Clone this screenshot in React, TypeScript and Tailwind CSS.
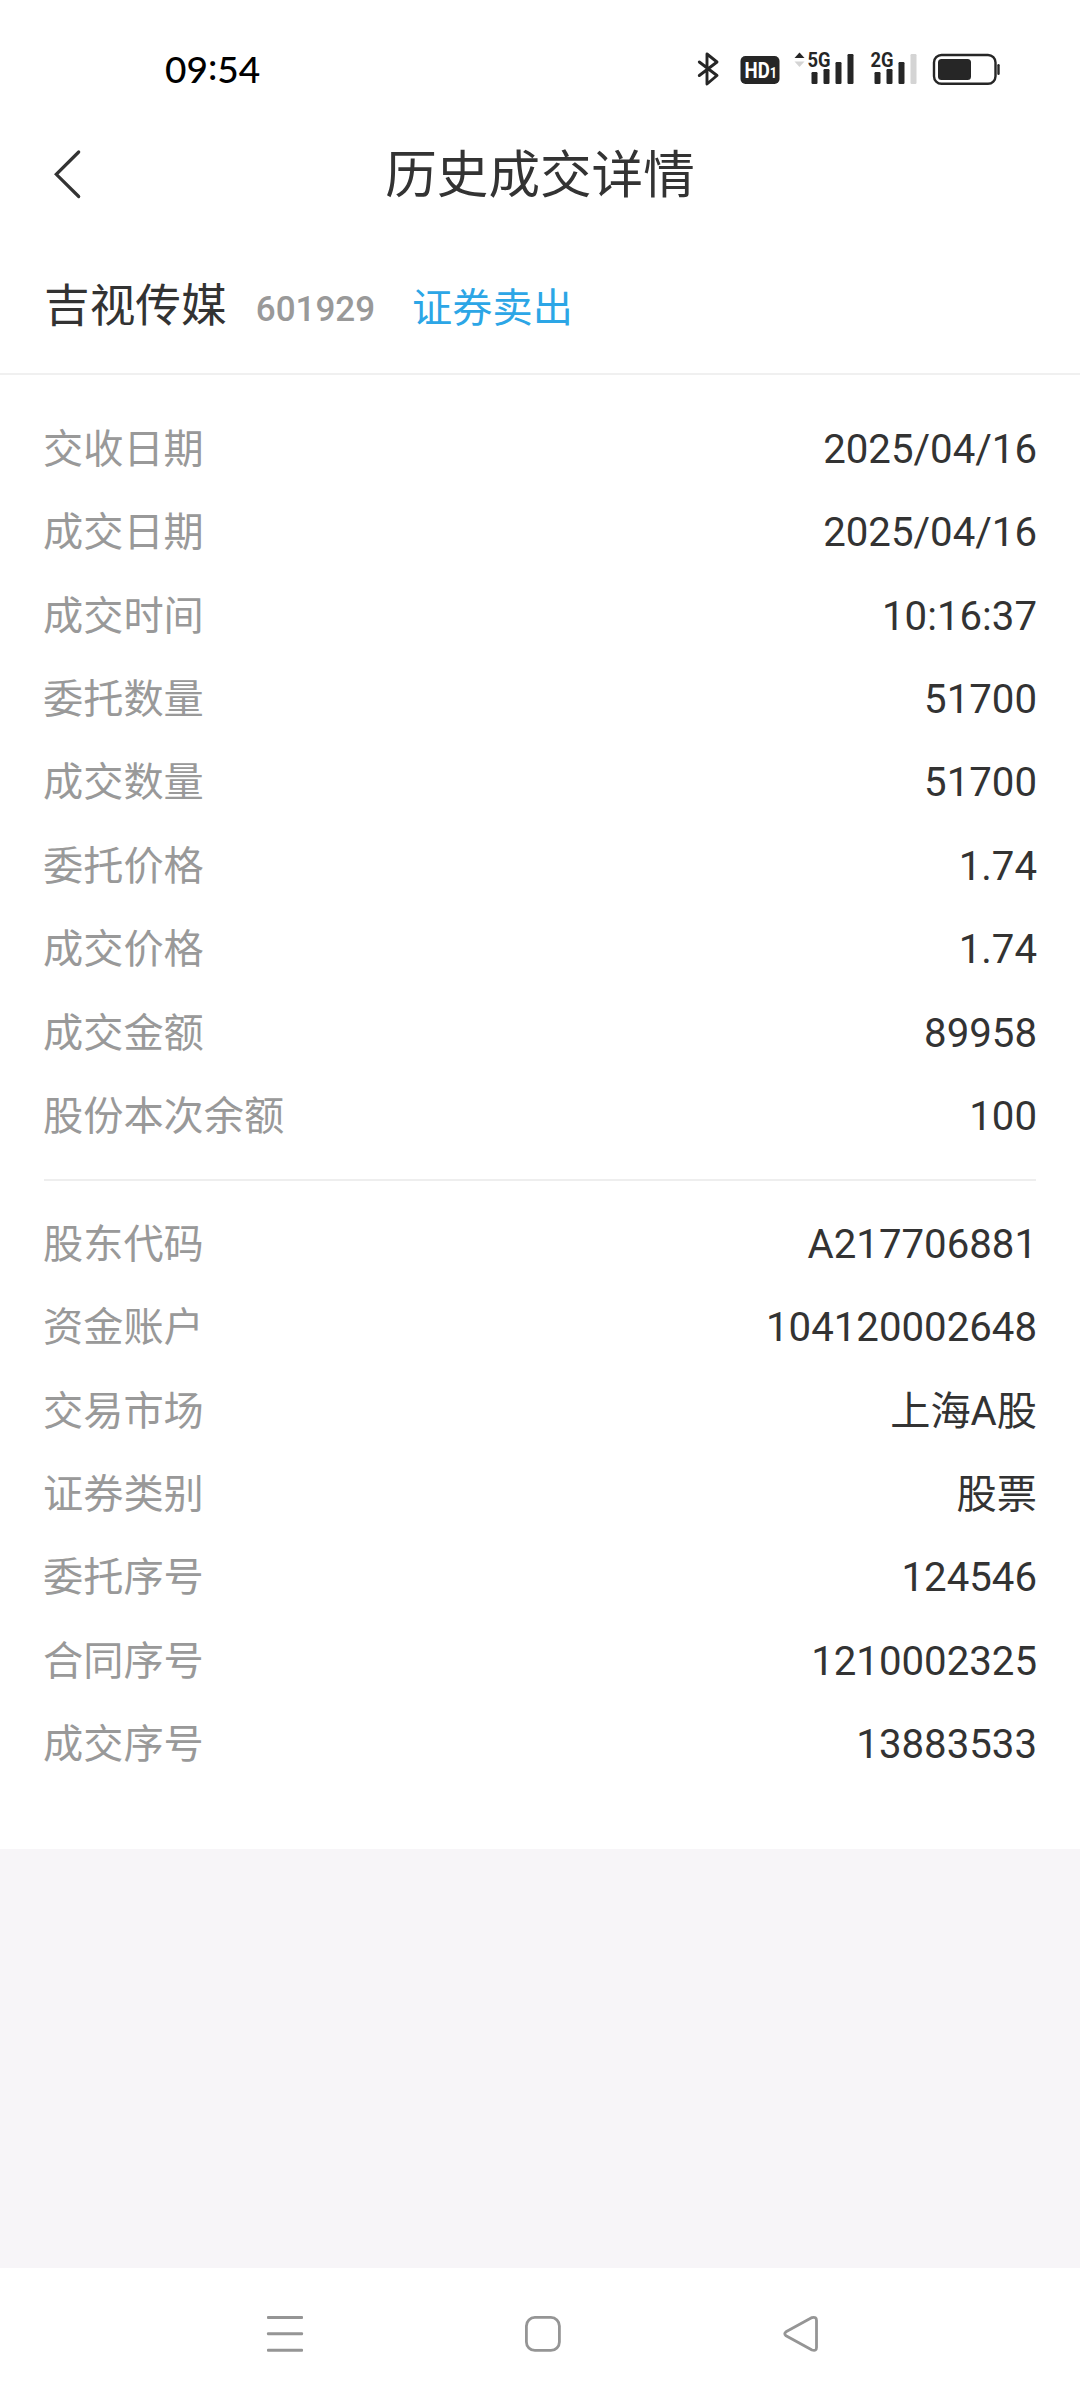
import React from 'react';

type Field = { label: string; value: string };

const tradeFields: Field[] = [
  { label: '交收日期', value: '2025/04/16' },
  { label: '成交日期', value: '2025/04/16' },
  { label: '成交时间', value: '10:16:37' },
  { label: '委托数量', value: '51700' },
  { label: '成交数量', value: '51700' },
  { label: '委托价格', value: '1.74' },
  { label: '成交价格', value: '1.74' },
  { label: '成交金额', value: '89958' },
  { label: '股份本次余额', value: '100' },
];

const accountFields: Field[] = [
  { label: '股东代码', value: 'A217706881' },
  { label: '资金账户', value: '104120002648' },
  { label: '交易市场', value: '上海A股' },
  { label: '证券类别', value: '股票' },
  { label: '委托序号', value: '124546' },
  { label: '合同序号', value: '1210002325' },
  { label: '成交序号', value: '13883533' },
];

const StatusIcons: React.FC = () => (
  <svg width="340" height="80" viewBox="0 0 340 80" fill="#262626" className="block">
    {/* Bluetooth */}
    <path d="M19.3 32 L37 45.5 L27 54 V24 L37 32 L19.3 45.5" fill="none" stroke="#262626" strokeWidth="2.9" strokeLinejoin="round" strokeLinecap="round" />

    {/* HD badge */}
    <rect x="60.5" y="26" width="39" height="28" rx="5" />
    <text x="64.5" y="48" fill="#fff" fontFamily="Roboto" fontWeight="700" fontSize="22" textLength="32.5" lengthAdjust="spacingAndGlyphs">
      HD<tspan fontSize="15">1</tspan>
    </text>

    {/* 5G signal */}
    <path d="M119.5 22.5 L124.5 28 H114.5 Z" />
    <path d="M119.5 37 L124.5 31.5 H114.5 Z" fill="#d4d4d4" />
    <text x="127.5" y="36.7" fontFamily="Roboto" fontWeight="700" fontSize="20.5" textLength="23" lengthAdjust="spacingAndGlyphs">5G</text>
    <rect x="131.5" y="42" width="6" height="12" rx="1.2" />
    <rect x="143.5" y="39" width="6" height="15" rx="1.2" />
    <rect x="155.5" y="32" width="6" height="22" rx="1.2" />
    <rect x="167.5" y="24" width="6" height="30" rx="1.2" />

    {/* 2G signal */}
    <text x="190.5" y="36.7" fontFamily="Roboto" fontWeight="700" fontSize="20.5" textLength="23" lengthAdjust="spacingAndGlyphs">2G</text>
    <rect x="194.5" y="42" width="6" height="12" rx="1.2" />
    <rect x="206.5" y="39" width="6" height="15" rx="1.2" />
    <rect x="218.5" y="32" width="6" height="22" rx="1.2" />
    <rect x="230.5" y="24" width="6" height="30" rx="1.2" fill="#d4d4d4" />

    {/* Battery */}
    <rect x="254" y="25" width="61.5" height="28.8" rx="7.5" fill="none" stroke="#262626" strokeWidth="2.4" />
    <rect x="258" y="29" width="33" height="21" rx="3.5" />
    <rect x="317.3" y="34" width="2.4" height="11" rx="1.2" />
  </svg>
);

const FieldRow: React.FC<Field> = ({ label, value }) => (
  <div className="flex h-[83.45px] items-center justify-between">
    <span className="-ml-px text-[#999999]">{label}</span>
    <span className="-mr-px text-[#333333]">{value}</span>
  </div>
);

export default function App() {
  return (
    <div className="flex h-[2400px] w-[1080px] flex-col bg-[#f7f5f8] font-['Roboto','Noto_Sans_CJK_SC',sans-serif] text-[#333333]">
      <div className="h-[1849px] shrink-0 bg-white">
        {/* Status bar */}
        <div className="flex h-[110px] items-start justify-between pt-[30px] pr-[60px] pl-[165px]">
          <div className="flex pt-[15px] font-['Lato',sans-serif] text-[37px] leading-[48px] font-medium text-black">
            <span>09</span>
            <span className="relative -top-[3px]">:</span>
            <span>54</span>
          </div>
          <StatusIcons />
        </div>

        {/* Title bar */}
        <div className="flex h-[128px] items-center px-[50px]">
          <svg width="34" height="54" viewBox="0 0 34 54" fill="none" stroke="#333333" strokeWidth="3.2" strokeLinecap="round" className="mb-[1px]">
            <path d="M28.7 5 L6.3 27.3 L28.7 49.5" />
          </svg>
          <h1 className="flex-1 pt-[4px] pr-[34px] text-center text-[51.6px] leading-[60px]">历史成交详情</h1>
        </div>

        {/* Stock heading */}
        <div className="flex h-[137px] items-baseline border-b-2 border-[#f0f0f0] px-[44px] pt-[37px]">
          <span className="text-[45.7px] leading-[64px]">吉视传媒</span>
          <span className="relative -top-px ml-[29px] text-[35px] font-medium text-[#999999]">601929</span>
          <span className="ml-[37px] text-[40.2px] text-[#2ca6e6]">证券卖出</span>
        </div>

        <div className="px-[44px] pt-[33px] text-[40.2px] leading-[60px]">
          {tradeFields.map((f) => (
            <FieldRow key={f.label} {...f} />
          ))}
          <div className="mt-[20px] mb-[22px] h-[2px] bg-[#eeeeee]" />
          {accountFields.map((f) => (
            <FieldRow key={f.label} {...f} />
          ))}
        </div>
      </div>

      <div className="flex-1" />

      {/* System navigation */}
      <div className="flex h-[132px] shrink-0 items-center justify-between bg-white pr-[258px] pl-[264px]">
        <svg width="42" height="42" viewBox="0 0 42 42" fill="#959595">
          <rect x="3" y="3" width="36" height="3" rx="1" />
          <rect x="3" y="19.3" width="36" height="3" rx="1" />
          <rect x="3" y="35.7" width="36" height="3" rx="1" />
        </svg>
        <svg width="42" height="42" viewBox="0 0 42 42" fill="none" stroke="#959595" strokeWidth="2.8">
          <rect x="4.4" y="4.4" width="33" height="33" rx="8.5" />
        </svg>
        <svg width="42" height="42" viewBox="0 0 42 42" fill="none" stroke="#959595" strokeWidth="2.8" strokeLinejoin="round">
          <path d="M6 18.8 L32 4.6 Q36.5 3.5 36.5 7.5 V34.5 Q36.5 38.5 32 37 L6 22.8 Q3.5 20.8 6 18.8 Z" />
        </svg>
      </div>
    </div>
  );
}
